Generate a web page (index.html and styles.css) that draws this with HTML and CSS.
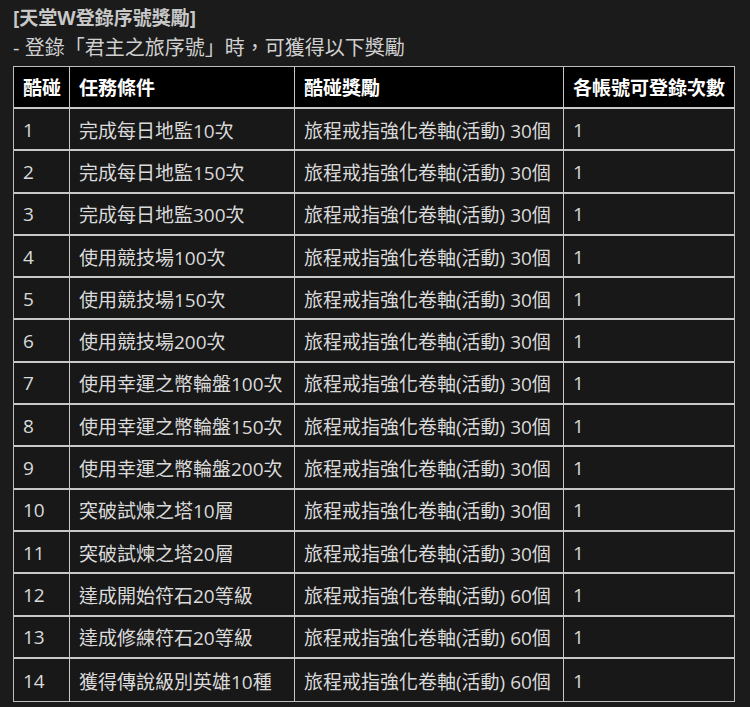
FILE: index.html
```html
<!DOCTYPE html>
<html lang="zh-Hant">
<head>
<meta charset="utf-8">
<link rel="stylesheet" href="styles.css">
</head>
<body>
<div class="page">
  <div class="title">[天堂W登錄序號獎勵]</div>
  <div class="subtitle">- 登錄「君主之旅序號」時，可獲得以下獎勵</div>
  <table class="rewards">
    <colgroup>
      <col class="c1"><col class="c2"><col class="c3"><col class="c4">
    </colgroup>
    <thead>
      <tr><th>酷碰</th><th>任務條件</th><th>酷碰獎勵</th><th>各帳號可登錄次數</th></tr>
    </thead>
    <tbody>
      <tr><td>1</td><td>完成每日地監10次</td><td>旅程戒指強化卷軸(活動) 30個</td><td>1</td></tr>
      <tr><td>2</td><td>完成每日地監150次</td><td>旅程戒指強化卷軸(活動) 30個</td><td>1</td></tr>
      <tr><td>3</td><td>完成每日地監300次</td><td>旅程戒指強化卷軸(活動) 30個</td><td>1</td></tr>
      <tr><td>4</td><td>使用競技場100次</td><td>旅程戒指強化卷軸(活動) 30個</td><td>1</td></tr>
      <tr><td>5</td><td>使用競技場150次</td><td>旅程戒指強化卷軸(活動) 30個</td><td>1</td></tr>
      <tr><td>6</td><td>使用競技場200次</td><td>旅程戒指強化卷軸(活動) 30個</td><td>1</td></tr>
      <tr><td>7</td><td>使用幸運之幣輪盤100次</td><td>旅程戒指強化卷軸(活動) 30個</td><td>1</td></tr>
      <tr><td>8</td><td>使用幸運之幣輪盤150次</td><td>旅程戒指強化卷軸(活動) 30個</td><td>1</td></tr>
      <tr><td>9</td><td>使用幸運之幣輪盤200次</td><td>旅程戒指強化卷軸(活動) 30個</td><td>1</td></tr>
      <tr><td>10</td><td>突破試煉之塔10層</td><td>旅程戒指強化卷軸(活動) 30個</td><td>1</td></tr>
      <tr><td>11</td><td>突破試煉之塔20層</td><td>旅程戒指強化卷軸(活動) 30個</td><td>1</td></tr>
      <tr><td>12</td><td>達成開始符石20等級</td><td>旅程戒指強化卷軸(活動) 60個</td><td>1</td></tr>
      <tr><td>13</td><td>達成修練符石20等級</td><td>旅程戒指強化卷軸(活動) 60個</td><td>1</td></tr>
      <tr><td>14</td><td>獲得傳說級別英雄10種</td><td>旅程戒指強化卷軸(活動) 60個</td><td>1</td></tr>
    </tbody>
  </table>
</div>
</body>
</html>
```

FILE: styles.css
```css
html, body {
  margin: 0;
  padding: 0;
  background: #1b1b1b;
}
.page {
  padding: 4px 13px 0 13px;
  font-family: "Open Sans", "Noto Sans CJK TC", sans-serif;
  color: #d6d6d6;
}
.title {
  font-size: 19px;
  font-weight: bold;
  color: #c8c8c8;
  line-height: 28px;
}
.subtitle {
  font-size: 20px;
  color: #d0d0d0;
  line-height: 28px;
  margin-top: 2px;
  margin-bottom: 4px;
}
.rewards {
  border-collapse: separate;
  border-spacing: 0;
  border: 1px solid #bdbdbd;
  width: 722px;
  table-layout: fixed;
  font-size: 19px;
}
.c1 { width: 56px; }
.c2 { width: 225px; }
.c3 { width: 269px; }
.c4 { width: auto; }
.rewards th, .rewards td {
  border: 1px solid #c8c8c8;
  border-width: 0 1px 2px 0;
  padding: 0 9px;
  text-align: left;
  white-space: nowrap;
  box-sizing: border-box;
}
.rewards th:last-child, .rewards td:last-child { border-right: 0; }
.rewards tbody tr:last-child td { border-bottom: 0; }
.rewards th {
  background: #000;
  color: #fff;
  font-weight: bold;
  height: 42px;
}
.rewards td {
  background: #181818;
  color: #dadada;
  height: 42.3px;
  padding-top: 1px;
}
```
